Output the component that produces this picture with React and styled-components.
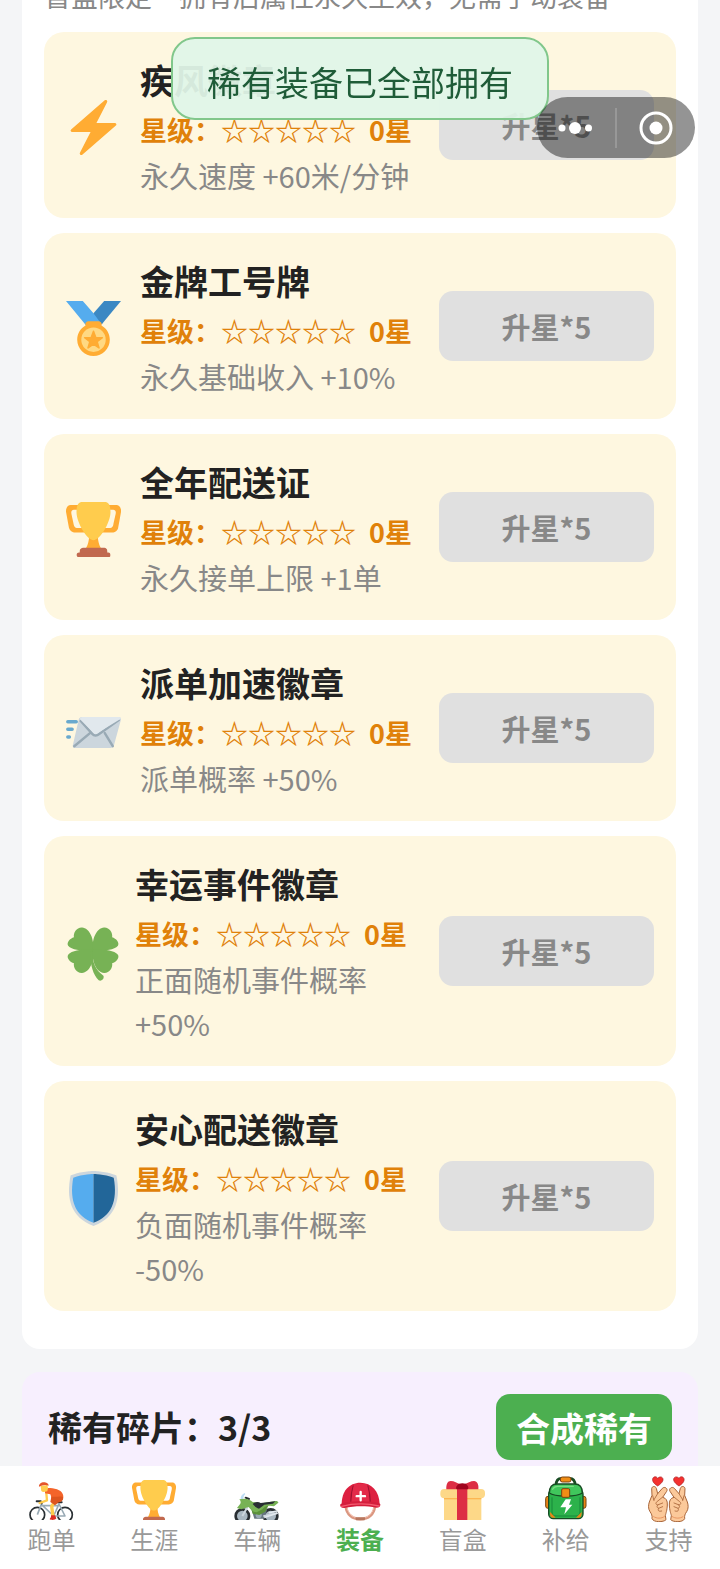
import React from "react";
import styled, { createGlobalStyle, css } from "styled-components";

const GlobalStyle = createGlobalStyle`
  * { box-sizing: border-box; }
  body {
    margin: 0;
    background: #f4f5f7;
    font-family: "Noto Sans CJK SC", "Noto Sans", sans-serif;
    color: #222;
  }
  button { font-family: inherit; }
`;

const Shell = styled.div`
  display: flex;
  flex-direction: column;
  height: 100vh;
`;

const Content = styled.main`
  flex: 1;
  min-height: 0;
  padding: 0 22px;
  overflow-y: auto;
  scrollbar-width: none;
`;

const Card = styled.section`
  margin-top: -24px;
  padding: 0 22px 38px;
  border-radius: 18px;
  background: #fff;
`;

const Hint = styled.p`
  margin: 0 0 16px;
  font-size: 27px;
  line-height: 40px;
  color: #888;
  white-space: nowrap;
`;

const BadgeList = styled.ul`
  display: flex;
  flex-direction: column;
  gap: 15px;
  margin: 0;
  padding: 0;
  list-style: none;
`;

const BadgeRow = styled.li`
  display: flex;
  align-items: center;
  gap: ${(p) => (p.$wraps ? 14 : 19)}px;
  padding: 20px 22px 21px;
  border-radius: 20px;
  background: #fef7e0;
`;

const BadgeIcon = styled.svg`
  flex: none;
  width: 55px;
  height: 60px;
  padding-top: 5px;
`;

const BadgeInfo = styled.div`
  flex: 1;
  min-width: 0;
`;

const BadgeName = styled.h2`
  margin: 0;
  font-size: 34px;
  line-height: 55px;
  font-weight: 700;
`;

const StarLine = styled.div`
  display: flex;
  font-size: 27px;
  line-height: 46px;
  font-weight: 700;
  color: #e08109;
  white-space: nowrap;
`;

const StarCount = styled.span`
  margin-left: 13px;
`;

const BadgeEffect = styled.p`
  margin: 0;
  font-size: 29px;
  line-height: 44px;
  color: #888;
`;

const Button = styled.button`
  flex: none;
  border: 0;
  border-radius: 14px;
  font-weight: 700;
  ${(p) =>
    p.$primary
      ? css`
          height: 66px;
          padding: 0 20px;
          font-size: 34px;
          background: #4caf50;
          color: #fff;
        `
      : css`
          width: 215px;
          height: 70px;
          padding: 0;
          font-size: 29px;
          background: #e0e0e0;
          color: #888;
        `}
`;

const ShardCard = styled.section`
  display: flex;
  align-items: center;
  justify-content: space-between;
  margin-top: 23px;
  padding: 22px 26px 40px;
  border-radius: 18px;
  background: #f7effe;
`;

const ShardCount = styled.h2`
  margin: 0;
  font-size: 34px;
  line-height: 66px;
  font-weight: 700;
`;

const Toast = styled.div`
  position: fixed;
  top: 37px;
  left: 50%;
  transform: translateX(-50%);
  padding: 17px 34px 11px;
  border: 2px solid #81c78b;
  border-radius: 24px;
  background: rgba(224, 245, 232, 0.94);
  color: #1f5c38;
  font-size: 34px;
  line-height: 51px;
  white-space: nowrap;
`;

const Capsule = styled.div`
  position: fixed;
  top: 97px;
  right: 25px;
  display: flex;
  align-items: center;
  width: 158px;
  height: 61px;
  border-radius: 31px;
  background: rgba(0, 0, 0, 0.42);
`;

const CapsuleButton = styled.button`
  flex: 1;
  display: flex;
  align-items: center;
  justify-content: center;
  height: 100%;
  padding: 0;
  border: 0;
  background: none;
`;

const CapsuleDivider = styled.span`
  width: 2px;
  height: 40px;
  background: #989898;
`;

const TabBar = styled.nav`
  display: flex;
  padding: 8px 0 13px;
  background: #fff;
`;

const Tab = styled.a`
  flex: 1;
  display: flex;
  flex-direction: column;
  align-items: center;
  font-size: 24px;
  line-height: 34px;
  text-decoration: none;
  font-weight: ${(p) => (p.$active ? 700 : 400)};
  color: ${(p) => (p.$active ? "#4caf50" : "#999")};
`;

const TabIconSlot = styled.span`
  display: flex;
  width: 48px;
  height: 48px;
`;

const TrophyShape = () => (
  <>
    <path fill="#FFAC33" d="M5.123 5h6C12.227 5 13 4.896 13 6V4c0-1.104-.773-2-1.877-2h-8c-2 0-3.583 2.125-3 5 0 0 1.791 9.375 1.917 9.958C2.373 18.5 4.164 20 6.081 20h6.958c1.105 0-.039-1.896-.039-3v-2c0 1.104-.773 2-1.877 2h-4c-1.104 0-1.833-1.042-2-2S3.539 7.667 3.539 7.667C3.206 5.75 4.018 5 5.123 5zm25.812 0h-6C23.831 5 22 4.896 22 6V4c0-1.104 1.831-2 2.935-2h8c2 0 3.584 2.125 3 5 0 0-1.633 9.419-1.771 10-.354 1.5-2.042 3-4 3h-7.146C21.914 20 22 18.104 22 17v-2c0 1.104 1.831 2 2.935 2h4c1.104 0 1.834-1.042 2-2s1.584-7.333 1.584-7.333C32.851 5.75 32.04 5 30.935 5zM20.832 22c0-6.958-2.709 0-2.709 0s-3-6.958-3 0-3.291 10-3.291 10h12.292S20.832 28.958 20.832 22z" />
    <path fill="#FFCC4D" d="M29.123 6.577C29.123 13.352 22.35 25 18 25S6.877 13.352 6.877 6.577C6.877 1 8.7 0 10.877 0h14.246c2.177 0 4 1 4 6.577z" />
    <path fill="#C1694F" d="M27 33c0 1.104.227 2-.877 2h-16C9.018 35 9 34.104 9 33v-1c0-1.104 1.164-2 2.206-2h13.917c1.042 0 1.877.896 1.877 2v1z" />
    <path fill="#C1694F" d="M29 34.625c0 .76.165 1.375-1.252 1.375H8.498C7.206 36 7 35.385 7 34.625v-.25C7 33.615 7.738 33 8.498 33h19.25c.759 0 1.252.615 1.252 1.375v.25z" />
  </>
);

const leaf = "M17.900 16.200C14 16.600 4.500 16.500 1.400 13 .2 10.800 2.600 8.200 5.200 7.400 4.600 4.600 7 .8 10.500 1 15.500 1.400 18.600 8.500 17.900 16.200z";

const badgeShapes = {
  bolt: (
    <path fill="#FFAC33" d="M32.938 15.651C32.792 15.26 32.418 15 32 15H19.925L26.89 1.458c.219-.426.106-.947-.271-1.243C26.437.071 26.218 0 26 0c-.233 0-.466.082-.653.243L18 6.588 3.347 19.243c-.316.273-.43.714-.284 1.105S3.582 21 4 21h12.075L9.11 34.542c-.219.426-.106.947.271 1.243.182.144.401.215.619.215.233 0 .466-.082.653-.243L18 29.412l14.653-12.655c.317-.273.43-.714.285-1.106z" />
  ),
  medal: (
    <>
      <path fill="#55ACEE" d="M18 8l-7-8H0l14 17 11.521-4.75z" />
      <path fill="#3B88C3" d="M25 0l-7 8 5.39 7.312 1.227-1.489L36 0z" />
      <path fill="#FFAC33" d="M23.205 16.026c.08-.217.131-.448.131-.693 0-1.104-.896-2-2-2h-6.667c-1.104 0-2 .896-2 2 0 .245.05.476.131.693-3.258 1.826-5.464 5.307-5.464 9.307C7.335 31.224 12.11 36 18.001 36c5.892 0 10.667-4.776 10.667-10.667 0-4-2.206-7.481-5.463-9.307z" />
      <circle fill="#FFD983" cx="18" cy="25.333" r="8" />
      <path fill="#FFAC33" stroke="#FFAC33" strokeLinejoin="round" d="M18 19.800l1.500 4.100 4.300.1-3.400 2.600 1.200 4.100-3.600-2.400-3.600 2.400 1.200-4.100-3.400-2.600 4.300-.1z" />
    </>
  ),
  trophy: <TrophyShape />,
  mail: (
    <>
      <path stroke="#69A9CE" strokeWidth="2.300" strokeLinecap="round" d="M1.200 12.200h5.500M1.200 17.200H4M1.200 22.200h1" />
      <path fill="#CCD6DD" d="M10.500 9.200H34.500c1.200 0 1.700.8 1.400 1.900l-4.500 16.500c-.4 1.200-1.200 1.800-2.400 1.800H5.900c-1.200 0-1.700-.8-1.400-1.900L8.300 11c.3-1.100 1.100-1.800 2.200-1.800z" />
      <path stroke="#99AAB5" strokeWidth="1.600" strokeLinecap="round" d="M5.400 28.300l10.300-8.600M30.600 28.300l-5.200-8.600" />
      <path fill="#E1E8ED" stroke="#99AAB5" strokeWidth="1.600" strokeLinejoin="round" d="M9.200 11.200L17.200 20.200c1.200 1.400 3 1.400 4.500.1L35 10.800" />
      <path fill="#E1E8ED" d="M9 10.500c.4-.8.900-1.300 1.600-1.300h23.900c.8 0 1.300.4 1.400 1.100L21.200 19.300c-1.200 1-2.500 1-3.400 0z" />
    </>
  ),
  clover: (
    <g fill="#77B255">
      <path d={leaf} />
      <path d={leaf} transform="translate(35.400 0) scale(-1 1)" />
      <path d={leaf} transform="translate(0 31.800) scale(1 -1)" />
      <path d={leaf} transform="translate(35.400 31.800) scale(-1 -1)" />
      <path d="M17.100 16c.2 8 2 12.500 7.400 16.500.8 2-1.300 4-3.100 3-4.200-4-5.700-11.500-5.300-18.500z" />
    </g>
  ),
  shield: (
    <>
      <path fill="#CCD6DD" d="M33 3c-6-2.800-15-3-15-3S9 .2 3 3C0 18 3 30.500 18 36c15-5.500 18-18 15-33z" />
      <path fill="#55ACEE" d="M18 33.884C6.412 29.729 1.961 19.831 4.760 4.444 11.063 2.029 17.928 2 18 2z" />
      <path fill="#226699" d="M31.240 4.444C24.937 2.029 18.071 2 18 2v31.884c11.588-4.155 16.041-14.053 13.240-29.440z" />
    </>
  ),
};

const CyclistIcon = () => (
  <svg width="48" height="46" viewBox="82 39 144 138" fill="none">
    <g stroke="#292F33" strokeWidth="5">
      <circle cx="113" cy="161" r="22" />
      <circle cx="196" cy="161" r="22" />
    </g>
    <path stroke="#99AAB5" strokeWidth="5" strokeLinejoin="round" d="M113 161l12-31 37 35h34l-18-36-16 36M125 134h50" />
    <path stroke="#292F33" strokeWidth="6" strokeLinecap="round" d="M111 121h12l3 6M168 124h18" />
    <path stroke="#FFCC4D" strokeWidth="7" strokeLinecap="round" strokeLinejoin="round" d="M140 97l2 21-22 8" />
    <path stroke="#FFCC4D" strokeWidth="10" strokeLinecap="round" strokeLinejoin="round" d="M168 118l-12 18 4 30" />
    <path fill="#F4642A" d="M136 85c10-7 30-4 42 3 12 6 16 18 11 29l-29 5c-5-10-6-18-8-22l-16-3z" />
    <path fill="#DD551F" d="M155 107c14 2 26-3 35 1 2 10-4 15-15 17l-9 8-14-10z" />
    <path fill="#FFCC4D" d="M123 75l20-3 2 9-2 10-11 2c-6 0-8-3-8-8z" />
    <path fill="#E5552A" d="M118 77c-1-8 7-14 17-13 8 1 12 6 12 10-9-3-19-2-29 3z" />
    <path fill="#DD2E24" d="M154 163h12l4 9c-3 6-16 6-20 3 0-3 5-5 4-12z" />
  </svg>
);

const TrophyIcon = () => (
  <svg width="48" height="46" viewBox="-1.600 -4.900 39.200 37.600">
    <TrophyShape />
  </svg>
);

const MotorbikeIcon = () => (
  <svg width="48" height="46" viewBox="69 39 144 138" fill="none">
    <circle cx="97" cy="165" r="20" fill="#AAB8C2" stroke="#292F33" strokeWidth="8" />
    <circle cx="182" cy="165" r="20" fill="#AAB8C2" stroke="#292F33" strokeWidth="8" />
    <path fill="#66757F" d="M125 146h46l-8 27h-30z" />
    <path stroke="#CCD6DD" strokeWidth="6" d="M97 165l16-28M160 166l42-10" />
    <circle cx="146" cy="163" r="9" fill="#99AAB5" />
    <path fill="#BDDDF4" d="M92 116c-1-9 3-16 12-20l2 3c-5 5-7 12-6 19z" />
    <path stroke="#292F33" strokeWidth="6" strokeLinecap="round" d="M107 110l10 4" />
    <path fill="#5C913B" d="M121 136l54-2-9 18-18 10-20-4z" />
    <path fill="#77B255" d="M88 115l16-2c10 0 18 4 24 10l28 4 40-7c6 0 9 2 9 5l-13 11c-17-5-29 0-35 9l-17 9c-11-1-17-6-24-16l-22 7-13-4 7-9c5-5 6-11 0-17z" />
    <path fill="#292F33" d="M128 129c7-7 17-8 24-3l44-5-7 7-26 3-16 12c-7-1-13-7-19-14z" />
    <path stroke="#E1E8ED" strokeWidth="5" strokeLinecap="round" d="M165 169l36-12M178 155l23-5" />
  </svg>
);

const HelmetIcon = () => (
  <svg width="48" height="48" viewBox="378 39 144 144" fill="none">
    <path stroke="#DB9781" strokeWidth="7" d="M407 136c2 24 19 39 44 39s42-15 44-39" />
    <path stroke="#F2B8A4" strokeWidth="3" d="M411 138c3 20 18 33 40 33s37-13 40-33" />
    <path fill="#B7775F" d="M436 169h30l-2 9h-26z" />
    <path fill="#DD2040" d="M395 132c-1-41 22-67 56-67s57 26 58 65z" />
    <path stroke="#9E1231" strokeWidth="4" d="M430 74c-5 16-8 36-8 54M473 74c5 16 8 36 8 54" />
    <path fill="#E32A49" d="M433 69h37c6 17 8 38 8 57h-53c0-19 2-40 8-57z" />
    <path fill="#D41E3D" d="M391 130c11-7 32-9 60-9s50 2 60 8c1 7-3 11-12 11-31-6-64-6-96 1-10 0-14-4-12-11z" />
    <path stroke="#F45B70" strokeWidth="4" strokeLinecap="round" d="M395 136c35-9 77-9 112-1" />
    <path stroke="#fff" strokeWidth="7" strokeLinecap="round" d="M452 93v25M440 105.500h25" />
  </svg>
);

const GiftIcon = () => (
  <svg width="48" height="46" viewBox="237 429 144 138">
    <path fill="#FDD888" d="M252 490h112v90H252z" />
    <path fill="#FCAB40" d="M252 501h112v4H252z" />
    <rect x="241" y="474" width="134" height="28" rx="12" fill="#FDD888" />
    <path fill="#DD2E44" d="M291 474h31v106h-31z" />
    <path fill="#DD2E44" d="M259 475c-1-15 4-25 13-25 11 0 20 7 27 9h15c8-2 18-9 28-9s15 11 13 25z" />
    <path fill="#A0041E" d="M292 463c2-8 28-8 30 0 4 5 4 9 1 12h-33c-3-3-2-8 2-12z" />
  </svg>
);

const BackpackIcon = () => (
  <svg width="48" height="48" viewBox="545 429 144 144" strokeLinejoin="round">
    <path fill="none" stroke="#174B23" strokeWidth="8" d="M587 463c0-15 7-21 17-21h24c10 0 16 7 17 21" />
    <rect x="600" y="438" width="32" height="15" rx="6" fill="#F18D15" stroke="#7B4412" strokeWidth="3" />
    <rect x="556" y="496" width="16" height="36" rx="7" fill="#E98516" stroke="#794612" strokeWidth="3" />
    <rect x="661" y="496" width="16" height="36" rx="7" fill="#E98516" stroke="#794612" strokeWidth="3" />
    <rect x="565" y="475" width="103" height="88" rx="14" fill="#2CB24B" stroke="#174B23" strokeWidth="4" />
    <path fill="#40C75C" stroke="#174B23" strokeWidth="4" d="M567 486c0-17 8-27 23-27h53c15 0 23 10 23 27-9 7-20 9-49 9s-41-2-50-9z" />
    <path fill="none" stroke="#78DE81" strokeWidth="4" strokeLinecap="round" d="M577 475c3-7 8-9 15-9h47" />
    <path fill="none" stroke="#16883A" strokeWidth="3" d="M575 499v44c0 9 4 12 12 12h60c8 0 12-4 12-12v-44" />
    <path fill="#E98516" d="M569 543l17 17h-9c-6 0-8-5-8-17zM664 543l-17 17h9c6 0 8-5 8-17z" />
    <rect x="604" y="473" width="24" height="26" rx="4" fill="#F18D15" stroke="#7B4412" strokeWidth="3" />
    <path fill="#fff" d="M616 505h16l-6 16h10l-24 29 5-21h-17z" />
  </svg>
);

const HeartHand = () => (
  <>
    <path fill="#F4312F" stroke="#A61E23" strokeWidth="2" d="M892 465c-10-6-17-14-15-22 3-8 12-7 15-1 5-6 14-6 16 2 1 8-7 15-16 21z" />
    <path fill="#FBC99A" stroke="#A86539" strokeWidth="3" d="M875 563c1-9-1-14-6-21-6-9-5-21-2-29l8-20-1-20c1-8 11-9 14-1l4 16 14-16c7-7 18 1 13 9l-12 18c10 2 15 10 14 23-1 18-4 23-6 32l2 12c-7 8-37 9-42-3z" />
    <path fill="none" stroke="#A86539" strokeWidth="2.500" strokeLinecap="round" d="M892 488l-11 18M906 499l-16 13c-6 4-3 11 4 9l13-5M894 521c-8 4-3 12 3 10l10-4M895 532c-4 6 0 11 9 8M877 494l4 15" />
    <path fill="none" stroke="#E99763" strokeWidth="3" strokeLinecap="round" d="M880 557c9 6 23 6 32 0" />
  </>
);

const HeartHandsIcon = () => (
  <svg width="48" height="48" viewBox="854 429 144 144" strokeLinejoin="round">
    <HeartHand />
    <g transform="translate(1848 0) scale(-1 1)">
      <HeartHand />
    </g>
  </svg>
);

const badges = [
  { icon: "bolt", name: "疾风徽章", effect: "永久速度 +60米/分钟" },
  { icon: "medal", name: "金牌工号牌", effect: "永久基础收入 +10%" },
  { icon: "trophy", name: "全年配送证", effect: "永久接单上限 +1单" },
  { icon: "mail", name: "派单加速徽章", effect: "派单概率 +50%" },
  { icon: "clover", name: "幸运事件徽章", effect: "正面随机事件概率 +50%", wraps: true },
  { icon: "shield", name: "安心配送徽章", effect: "负面随机事件概率 -50%", wraps: true },
];

const tabs = [
  { label: "跑单", Icon: CyclistIcon },
  { label: "生涯", Icon: TrophyIcon },
  { label: "车辆", Icon: MotorbikeIcon },
  { label: "装备", Icon: HelmetIcon, active: true },
  { label: "盲盒", Icon: GiftIcon },
  { label: "补给", Icon: BackpackIcon },
  { label: "支持", Icon: HeartHandsIcon },
];

export default function App() {
  return (
    <Shell>
      <GlobalStyle />
      <Content>
        <Card>
          <Hint>盲盒限定·拥有后属性永久生效，无需手动装备</Hint>
          <BadgeList>
            {badges.map((badge) => (
              <BadgeRow key={badge.name} $wraps={badge.wraps}>
                <BadgeIcon viewBox="0 0 36 36" fill="none" aria-hidden="true">
                  {badgeShapes[badge.icon]}
                </BadgeIcon>
                <BadgeInfo>
                  <BadgeName>{badge.name}</BadgeName>
                  <StarLine>
                    星级：☆☆☆☆☆<StarCount>0星</StarCount>
                  </StarLine>
                  <BadgeEffect>{badge.effect}</BadgeEffect>
                </BadgeInfo>
                <Button type="button" disabled>
                  升星*5
                </Button>
              </BadgeRow>
            ))}
          </BadgeList>
        </Card>
        <ShardCard>
          <ShardCount>稀有碎片：3/3</ShardCount>
          <Button type="button" $primary>
            合成稀有
          </Button>
        </ShardCard>
      </Content>
      <TabBar>
        {tabs.map(({ label, Icon, active }) => (
          <Tab key={label} href="#" $active={active} aria-current={active ? "page" : undefined}>
            <TabIconSlot aria-hidden="true">
              <Icon />
            </TabIconSlot>
            {label}
          </Tab>
        ))}
      </TabBar>
      <Toast role="status">稀有装备已全部拥有</Toast>
      <Capsule>
        <CapsuleButton type="button" aria-label="更多">
          <svg width="36" height="14" viewBox="0 0 36 14" fill="#fff">
            <circle cx="4" cy="7" r="3.500" />
            <circle cx="17" cy="7" r="6" />
            <circle cx="30.500" cy="7" r="3.500" />
          </svg>
        </CapsuleButton>
        <CapsuleDivider />
        <CapsuleButton type="button" aria-label="关闭">
          <svg width="34" height="34" viewBox="0 0 34 34">
            <circle cx="17" cy="17" r="15" fill="none" stroke="#fff" strokeWidth="3" />
            <circle cx="17" cy="17" r="6.500" fill="#fff" />
          </svg>
        </CapsuleButton>
      </Capsule>
    </Shell>
  );
}
